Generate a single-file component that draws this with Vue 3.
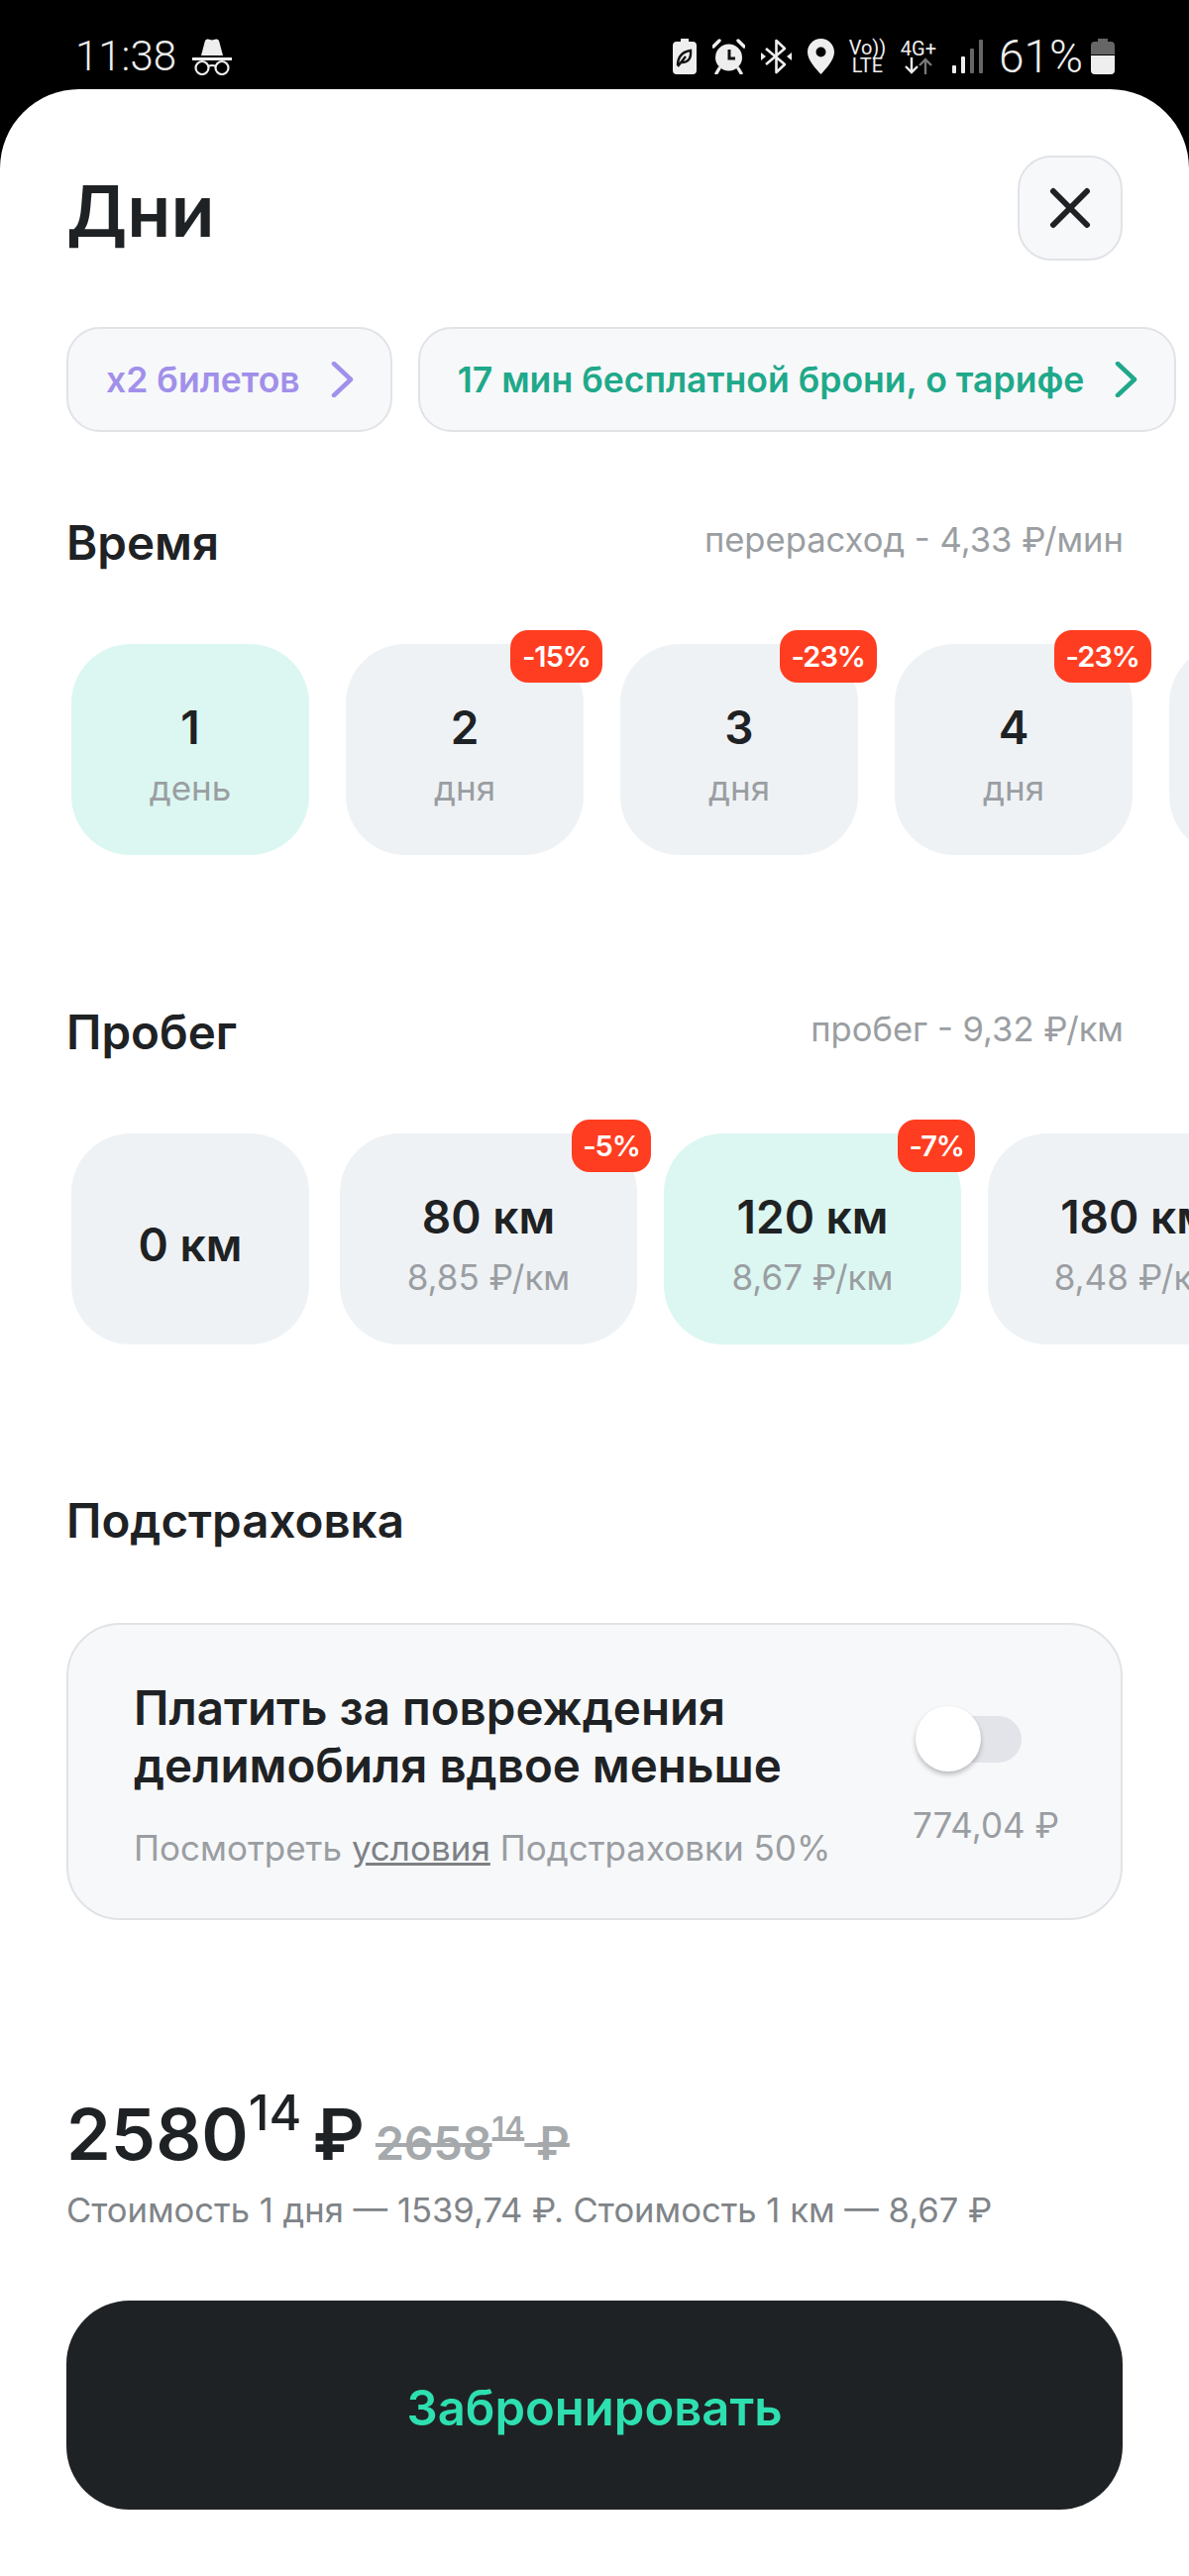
<template>
  <div class="screen">
    <div class="status">
      <span class="clock">11:38</span>
      <svg class="ic-spy" viewBox="0 0 40 38" width="40" height="38">
        <path d="M9 18 L13 3 Q14 1 16 1.5 L20 2.5 L24 1.500 Q26 1 27 3 L31 18 Z" fill="#eee"/>
        <rect x="0" y="20" width="40" height="3" fill="#eee"/>
        <circle cx="10" cy="30.500" r="6.500" fill="none" stroke="#eee" stroke-width="2.200"/>
        <circle cx="30" cy="30.500" r="6.500" fill="none" stroke="#eee" stroke-width="2.200"/>
        <path d="M16 29 Q20 27 24 29" fill="none" stroke="#eee" stroke-width="2"/>
      </svg>
      <div class="status-right">
        <svg viewBox="0 0 24 36" width="24" height="36">
          <path d="M8 0h8v3h4a4 4 0 0 1 4 4v25a4 4 0 0 1-4 4H4a4 4 0 0 1-4-4V7a4 4 0 0 1 4-4h4z" fill="#eee"/>
          <path d="M5 27 Q5 14 18 12 Q19 24 9 24 M5 28 L13 18" fill="none" stroke="#111" stroke-width="2.400"/>
        </svg>
        <svg viewBox="0 0 33 36" width="33" height="36">
          <circle cx="16.500" cy="19" r="13.500" fill="#eee"/>
          <path d="M17 11v9h6" fill="none" stroke="#111" stroke-width="3"/>
          <path d="M1 8 L7 2 M32 8 L26 2" stroke="#eee" stroke-width="3.400" stroke-linecap="round"/>
          <path d="M7 30 L4 35 M26 30 L29 35" stroke="#eee" stroke-width="3.400" stroke-linecap="round"/>
        </svg>
        <svg viewBox="0 0 31 36" width="31" height="36">
          <path d="M5 10 L24 26 L15.500 34 V2 L24 10 L5 26" fill="none" stroke="#eee" stroke-width="2.600" stroke-linejoin="round"/>
          <path d="M0 14 L5 18 L0 22 Z M31 14 L26 18 L31 22 Z" fill="#eee"/>
        </svg>
        <svg viewBox="0 0 27 36" width="27" height="36">
          <path fill-rule="evenodd" fill="#eee" d="M13.500 0C6 0 0 6 0 13.500 0 22 9 31 13.500 36 18 31 27 22 27 13.500 27 6 21 0 13.500 0zm0 8.500a5 5 0 1 1 0 10 5 5 0 0 1 0-10z"/>
        </svg>
        <div class="net vo"><span>Vo))</span><span>LTE</span></div>
        <div class="net g4">
          <span>4G+</span>
          <svg viewBox="0 0 30 17" width="30" height="17">
            <path d="M8 0v15M2 9l6 6 6-6" fill="none" stroke="#eee" stroke-width="2.400"/>
            <path d="M22 17V2M16 8l6-6 6 6" fill="none" stroke="#777" stroke-width="2.400"/>
          </svg>
        </div>
        <svg viewBox="0 0 31 36" width="31" height="36">
          <rect x="0" y="27" width="4" height="8" rx="1" fill="#eee"/>
          <rect x="9" y="18" width="4" height="17" rx="1" fill="#eee"/>
          <rect x="18" y="10" width="4" height="25" rx="1" fill="#666"/>
          <rect x="27" y="1" width="4" height="34" rx="1" fill="#666"/>
        </svg>
        <span class="pct">61%</span>
        <svg viewBox="0 0 24 36" width="24" height="36">
          <path d="M7 0h10v3h3a4 4 0 0 1 4 4v9H0V7a4 4 0 0 1 4-4h3z" fill="#666"/>
          <path d="M0 17h24v15a4 4 0 0 1-4 4H4a4 4 0 0 1-4-4z" fill="#eee"/>
        </svg>
      </div>
    </div>

    <div class="sheet">
      <div class="head">
        <h1 class="title">Дни</h1>
        <button class="close">
          <svg viewBox="0 0 42 42" width="42" height="42">
            <path d="M4 4L38 38M38 4L4 38" stroke="#1f2224" stroke-width="6" stroke-linecap="round"/>
          </svg>
        </button>
      </div>

      <div class="chips">
        <div class="chip purple">
          <span>x2 билетов</span>
          <svg viewBox="0 0 24 36" width="24" height="36"><path d="M4 2L21 18L4 34" fill="none" stroke="currentColor" stroke-width="4.500" stroke-linecap="round" stroke-linejoin="round"/></svg>
        </div>
        <div class="chip green">
          <span>17 мин бесплатной брони, о тарифе</span>
          <svg viewBox="0 0 24 36" width="24" height="36"><path d="M4 2L21 18L4 34" fill="none" stroke="currentColor" stroke-width="4.500" stroke-linecap="round" stroke-linejoin="round"/></svg>
        </div>
      </div>

      <div class="sec-head first">
        <h2 class="sec-title">Время</h2>
        <span class="sec-note">перерасход - 4,33 ₽/мин</span>
      </div>
      <div class="tiles days">
        <div v-for="(d, i) in days" :key="i" class="tile" :class="{ on: d.on }">
          <span v-if="d.off" class="badge">{{ d.off }}</span>
          <span v-if="d.num" class="tile-main">{{ d.num }}</span>
          <span v-if="d.unit" class="tile-sub">{{ d.unit }}</span>
        </div>
      </div>

      <div class="sec-head second">
        <h2 class="sec-title">Пробег</h2>
        <span class="sec-note">пробег - 9,32 ₽/км</span>
      </div>
      <div class="tiles kms">
        <div v-for="k in kms" :key="k.km" class="tile" :class="{ on: k.on, narrow: !k.rate }">
          <span v-if="k.off" class="badge">{{ k.off }}</span>
          <span class="tile-main">{{ k.km }}</span>
          <span v-if="k.rate" class="tile-sub">{{ k.rate }}</span>
        </div>
      </div>

      <h2 class="sec-title third">Подстраховка</h2>
      <div class="card">
        <div class="card-text">
          <div class="card-title">Платить за повреждения<br>делимобиля вдвое меньше</div>
          <div class="card-sub">Посмотреть <u>условия</u> Подстраховки 50%</div>
        </div>
        <div class="card-side">
          <div class="toggle"><span class="knob"></span></div>
          <span class="card-price">774,04 ₽</span>
        </div>
      </div>

      <div class="price">
        <span class="now">2580<sup>14</sup> ₽</span>
        <s class="old">2658<sup>14</sup> ₽</s>
      </div>
      <div class="price-note">Стоимость 1 дня — 1539,74 ₽. Стоимость 1 км — 8,67 ₽</div>

      <button class="book">Забронировать</button>
    </div>
  </div>
</template>

<script setup>
const days = [
  { num: '1', unit: 'день', on: true },
  { num: '2', unit: 'дня', off: '-15%' },
  { num: '3', unit: 'дня', off: '-23%' },
  { num: '4', unit: 'дня', off: '-23%' },
  {}
]

const kms = [
  { km: '0 км' },
  { km: '80 км', rate: '8,85 ₽/км', off: '-5%' },
  { km: '120 км', rate: '8,67 ₽/км', off: '-7%', on: true },
  { km: '180 км', rate: '8,48 ₽/км' }
]
</script>

<style>
body { background: #000; }
</style>

<style scoped>
.screen { width: 1200px; height: 2600px; background: #000; font-family: Inter, "Noto Sans", sans-serif; color: #1f2224; overflow: hidden; display: flex; flex-direction: column; }

.status { height: 90px; flex: none; display: flex; align-items: center; padding: 24px 75px 0 76px; box-sizing: border-box; color: #eee; font-family: Roboto, sans-serif; }
.clock { font-size: 42px; font-weight: 300; line-height: 1; }
.ic-spy { margin-left: 16px; }
.status-right { margin-left: auto; display: flex; align-items: center; gap: 16px; }
.net { display: flex; flex-direction: column; align-items: center; font-size: 20px; line-height: 18px; font-weight: 400; }
.vo { width: 35px; }
.g4 { width: 36px; }
.pct { font-size: 46px; font-weight: 300; line-height: 1; margin-right: -8px; }

.sheet { flex: 1; background: #fff; border-radius: 80px 80px 0 0; padding: 67px 0 0 67px; position: relative; }

.head { display: flex; align-items: center; justify-content: space-between; padding-right: 67px; height: 106px; }
.title { margin: 0; font-size: 72px; font-weight: 600; line-height: 1; position: relative; top: 3px; }
.close { width: 106px; height: 106px; box-sizing: border-box; border: 2px solid #e1e3e6; border-radius: 34px; background: #f7f8fa; display: flex; align-items: center; justify-content: center; padding: 0; }

.chips { display: flex; gap: 26px; margin-top: 67px; overflow: hidden; }
.chip { height: 106px; box-sizing: border-box; border: 2px solid #e1e3e6; border-radius: 34px; background: #f7f8fa; display: flex; align-items: center; gap: 30px; padding: 0 37px 0 38px; font-size: 35.600px; font-weight: 600; white-space: nowrap; flex: none; }
.purple { color: #a190ea; }
.green { color: #1fa98a; }

.sec-head { display: flex; align-items: center; justify-content: space-between; padding-right: 66px; }
.first { margin-top: 86px; }
.second { margin-top: 153px; }
.sec-title { margin: 0; font-size: 47.500px; font-weight: 600; line-height: 52px; }
.sec-note { font-size: 34.600px; color: #9a9ea2; position: relative; top: -4px; }
.third { margin-top: 152px; }

.tiles { display: flex; margin-top: 76px; padding-left: 5px; }
.days { gap: 37px; }
.kms { gap: 27px; }
.tile { position: relative; flex: none; width: 240px; height: 213px; box-sizing: border-box; padding-top: 10px; border-radius: 60px; background: #eff2f5; display: flex; flex-direction: column; align-items: center; justify-content: center; gap: 14px; }
.kms .tile { width: 300px; }
.kms .tile.narrow { width: 240px; margin-right: 4px; }
.tile.on { background: #dcf7f1; }
.tile-main { font-size: 46px; font-weight: 600; line-height: 52px; white-space: nowrap; }
.tile-sub { font-size: 35px; color: #9a9ea2; line-height: 42px; white-space: nowrap; }
.badge { position: absolute; top: -14px; right: -19px; height: 53px; padding: 0 12px; border-radius: 18px; background: #ff3d20; color: #fff; font-size: 29px; font-weight: 600; letter-spacing: -1px; line-height: 53px; }
.kms .badge { padding: 0 11px; right: -14px; }

.card { margin-top: 77px; width: 1066px; height: 300px; box-sizing: border-box; border: 2px solid #e1e3e6; border-radius: 54px; background: #f7f8fa; display: flex; justify-content: space-between; padding: 55px 62px 0 66px; }
.card-title { font-size: 47.500px; font-weight: 600; line-height: 58px; white-space: nowrap; }
.card-sub { margin-top: 33px; font-size: 35px; color: #9a9ea2; white-space: nowrap; }
.card-sub u { color: #7d8185; }
.card-side { display: flex; flex-direction: column; align-items: flex-end; }
.toggle { position: relative; width: 100px; height: 47px; margin-top: 37px; margin-right: 38px; border-radius: 24px; background: #e3e4e9; }
.knob { position: absolute; left: -7px; top: -10px; width: 66px; height: 66px; border-radius: 50%; background: #fff; box-shadow: 0 3px 5px rgba(0, 0, 0, 0.25); }
.card-price { margin-top: 42px; font-size: 35px; color: #9a9ea2; white-space: nowrap; }

.price { margin-top: 173px; display: flex; align-items: baseline; gap: 11px; height: 86px; }
.now { font-size: 72px; font-weight: 600; line-height: 86px; word-spacing: -7px; }
.now sup { font-size: 50px; font-weight: 500; vertical-align: 30px; line-height: 0; }
.old { font-size: 46.500px; font-weight: 600; color: #a5a9ac; }
.old sup { font-size: 30px; vertical-align: 22px; line-height: 0; }
.price-note { margin-top: 12px; font-size: 34.600px; color: #808488; white-space: nowrap; }

.book { display: block; margin-top: 71px; width: 1066px; height: 211px; border: none; border-radius: 64px; background: #1f2224; color: #2edfb0; font-family: inherit; font-size: 49px; font-weight: 600; padding: 6px 0 0; }
</style>
